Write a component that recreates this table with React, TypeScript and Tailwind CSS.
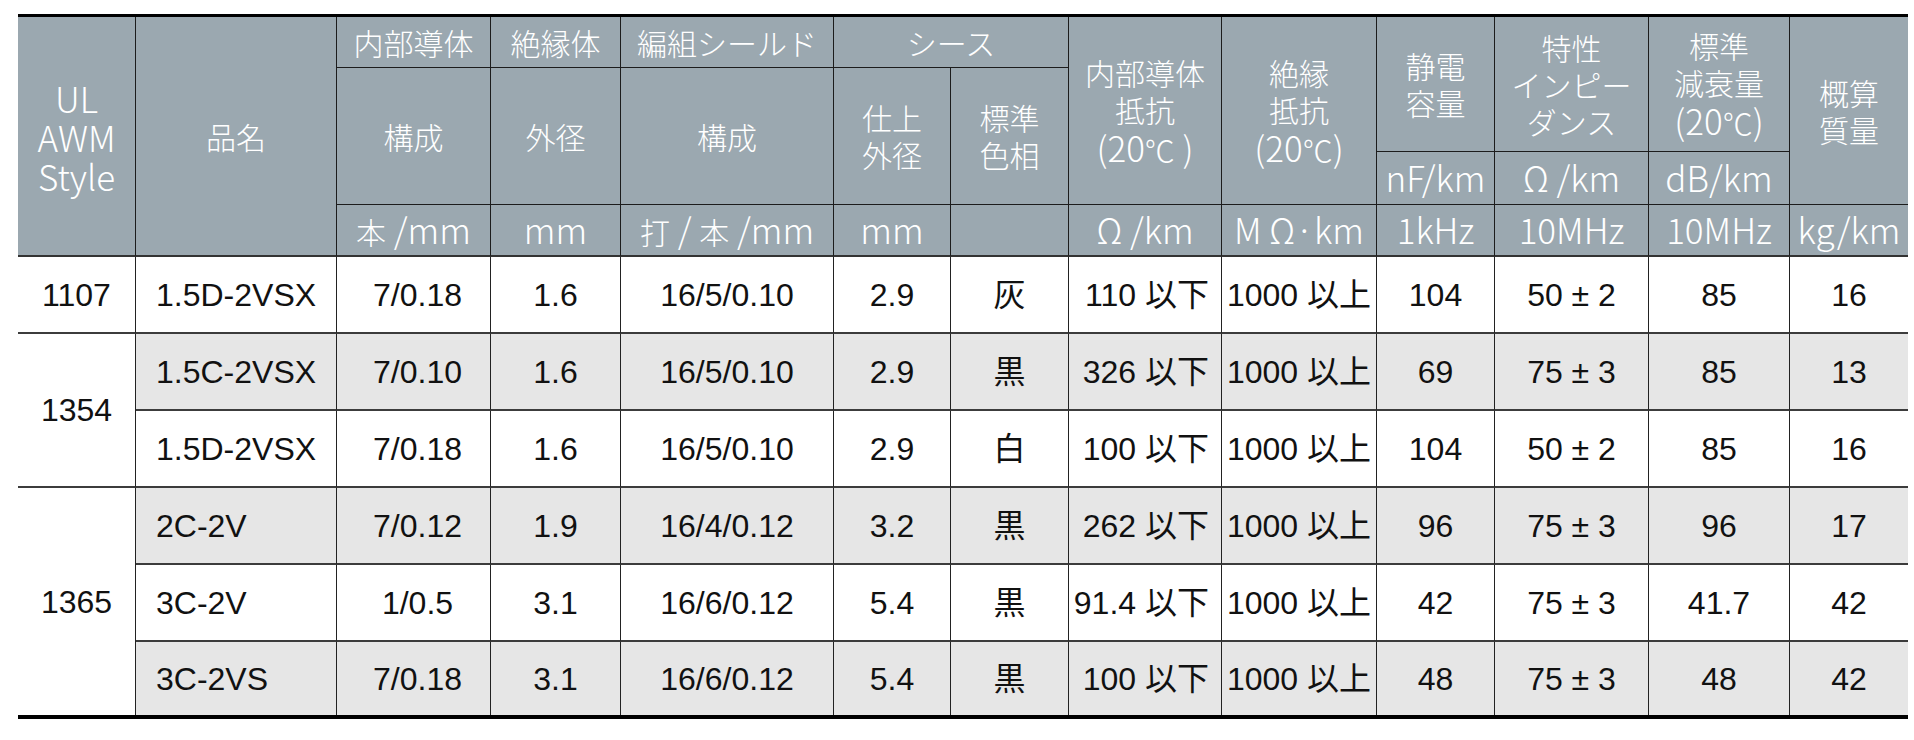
import React from "react";

const H =
  "flex items-center justify-center text-center bg-[#9ba8b0] text-white border-[#1c1c1c] whitespace-nowrap";
const B =
  "flex items-center justify-center text-center text-[#111] whitespace-nowrap";

function L({ children }: { children: React.ReactNode }) {
  return <span className="text-[35px]">{children}</span>;
}

function Hc({ c, children }: { c: string; children?: React.ReactNode }) {
  return (
    <div className={`${H} ${c}`}>
      <div>{children}</div>
    </div>
  );
}

type Row = {
  name: string;
  bg: string;
  v: string[];
};

const rows: Row[] = [
  { name: "1.5D-2VSX", bg: "bg-white", v: ["7/0.18", "1.6", "16/5/0.10", "2.9", "灰", "110 以下", "1000 以上", "104", "50 ± 2", "85", "16"] },
  { name: "1.5C-2VSX", bg: "bg-[#e6e6e6]", v: ["7/0.10", "1.6", "16/5/0.10", "2.9", "黒", "326 以下", "1000 以上", "69", "75 ± 3", "85", "13"] },
  { name: "1.5D-2VSX", bg: "bg-white", v: ["7/0.18", "1.6", "16/5/0.10", "2.9", "白", "100 以下", "1000 以上", "104", "50 ± 2", "85", "16"] },
  { name: "2C-2V", bg: "bg-[#e6e6e6]", v: ["7/0.12", "1.9", "16/4/0.12", "3.2", "黒", "262 以下", "1000 以上", "96", "75 ± 3", "96", "17"] },
  { name: "3C-2V", bg: "bg-white", v: ["1/0.5", "3.1", "16/6/0.12", "5.4", "黒", "91.4 以下", "1000 以上", "42", "75 ± 3", "41.7", "42"] },
  { name: "3C-2VS", bg: "bg-[#e6e6e6]", v: ["7/0.18", "3.1", "16/6/0.12", "5.4", "黒", "100 以下", "1000 以上", "48", "75 ± 3", "48", "42"] },
];

function BodyRow({ r, last }: { r: Row; last: boolean }) {
  const bb = last ? "" : "border-b-2 border-b-[#3c3c3c]";
  const vr = "border-r border-r-[#222]";
  const cls = (extra: string) => `${B} ${r.bg} ${bb} ${extra}`;
  return (
    <>
      <div className={`${cls(vr)} !justify-start pl-[20px]`}>{r.name}</div>
      <div className={`${cls(vr)} pl-[8px]`}>{r.v[0]}</div>
      <div className={cls(vr)}>{r.v[1]}</div>
      <div className={cls(vr)}>{r.v[2]}</div>
      <div className={cls(vr)}>{r.v[3]}</div>
      <div className={cls(vr)}>{r.v[4]}</div>
      <div className={`${cls(vr)} !justify-end pr-[12px]`}>{r.v[5]}</div>
      <div className={cls(vr)}>{r.v[6]}</div>
      <div className={cls(vr)}>{r.v[7]}</div>
      <div className={cls(vr)}>{r.v[8]}</div>
      <div className={cls(vr)}>{r.v[9]}</div>
      <div className={cls("")}>{r.v[10]}</div>
    </>
  );
}

const BB = "border-b-2 border-b-[#333]";

export default function App() {
  return (
    <div className="w-[1914px] h-[740px] bg-white pt-[14px] pl-[18px]">
      <div className="w-[1890px] grid grid-cols-[118px_201px_154px_130px_213px_117px_118px_153px_155px_118px_154px_141px_118px] grid-rows-[51px_84px_53px_52px_77px_77px_77px_77px_77px_73px] border-t-[3px] border-b-4 border-black">
        {/* Header */}
        <div className="contents font-['Noto_Sans_CJK_JP',sans-serif] font-light text-[30px] leading-[37px]">
          <Hc c={`col-start-1 row-start-1 row-span-4 border-r ${BB} text-[35px] leading-[39px]`}>
            UL<br />AWM<br />Style
          </Hc>
          <Hc c={`col-start-2 row-start-1 row-span-4 border-r ${BB}`}>品名</Hc>

          <Hc c="col-start-3 row-start-1 border-r border-b">内部導体</Hc>
          <Hc c="col-start-4 row-start-1 border-r border-b">絶縁体</Hc>
          <Hc c="col-start-5 row-start-1 border-r border-b">編組シールド</Hc>
          <Hc c="col-start-6 col-span-2 row-start-1 border-r border-b">シース</Hc>
          <Hc c="col-start-8 row-start-1 row-span-3 border-r border-b">
            内部導体<br />抵抗<br /><L>(20</L>℃<L> )</L>
          </Hc>
          <Hc c="col-start-9 row-start-1 row-span-3 border-r border-b">
            絶縁<br />抵抗<br /><L>(20</L>℃<L>)</L>
          </Hc>
          <Hc c="col-start-10 row-start-1 row-span-2 border-r border-b">
            静電<br />容量
          </Hc>
          <Hc c="col-start-11 row-start-1 row-span-2 border-r border-b">
            特性<br />インピー<br />ダンス
          </Hc>
          <Hc c="col-start-12 row-start-1 row-span-2 border-r border-b">
            標準<br />減衰量<br /><L>(20</L>℃<L>)</L>
          </Hc>
          <Hc c="col-start-13 row-start-1 row-span-3 border-b">
            概算<br />質量
          </Hc>

          <Hc c="col-start-3 row-start-2 row-span-2 border-r border-b">構成</Hc>
          <Hc c="col-start-4 row-start-2 row-span-2 border-r border-b">外径</Hc>
          <Hc c="col-start-5 row-start-2 row-span-2 border-r border-b">構成</Hc>
          <Hc c="col-start-6 row-start-2 row-span-2 border-r border-b">
            仕上<br />外径
          </Hc>
          <Hc c="col-start-7 row-start-2 row-span-2 border-r border-b">
            標準<br />色相
          </Hc>

          <Hc c="col-start-10 row-start-3 border-r border-b"><L>nF/km</L></Hc>
          <Hc c="col-start-11 row-start-3 border-r border-b"><L>Ω /km</L></Hc>
          <Hc c="col-start-12 row-start-3 border-r border-b"><L>dB/km</L></Hc>

          <Hc c={`col-start-3 row-start-4 border-r ${BB}`}>本<L> /mm</L></Hc>
          <Hc c={`col-start-4 row-start-4 border-r ${BB}`}><L>mm</L></Hc>
          <Hc c={`col-start-5 row-start-4 border-r ${BB}`}>打<L> / </L>本<L> /mm</L></Hc>
          <Hc c={`col-start-6 row-start-4 border-r ${BB}`}><L>mm</L></Hc>
          <Hc c={`col-start-7 row-start-4 border-r ${BB}`}></Hc>
          <Hc c={`col-start-8 row-start-4 border-r ${BB}`}><L>Ω /km</L></Hc>
          <Hc c={`col-start-9 row-start-4 border-r ${BB}`}><L>M Ω·km</L></Hc>
          <Hc c={`col-start-10 row-start-4 border-r ${BB}`}><L>1kHz</L></Hc>
          <Hc c={`col-start-11 row-start-4 border-r ${BB}`}><L>10MHz</L></Hc>
          <Hc c={`col-start-12 row-start-4 border-r ${BB}`}><L>10MHz</L></Hc>
          <Hc c={`col-start-13 row-start-4 ${BB}`}><L>kg/km</L></Hc>
        </div>

        {/* Body */}
        <div className="contents font-['Liberation_Sans','Noto_Sans_CJK_JP',sans-serif] text-[32px]">
          <div className={`${B} bg-white col-start-1 row-start-5 border-r border-r-[#222] border-b-2 border-b-[#3c3c3c]`}>1107</div>
          <div className={`${B} bg-white col-start-1 row-start-6 row-span-2 border-r border-r-[#222] border-b-2 border-b-[#3c3c3c]`}>1354</div>
          <div className={`${B} bg-white col-start-1 row-start-8 row-span-3 border-r border-r-[#222]`}>1365</div>
          {rows.map((r, i) => (
            <div key={i} className="contents">
              <BodyRow r={r} last={i === rows.length - 1} />
            </div>
          ))}
        </div>
      </div>
    </div>
  );
}
